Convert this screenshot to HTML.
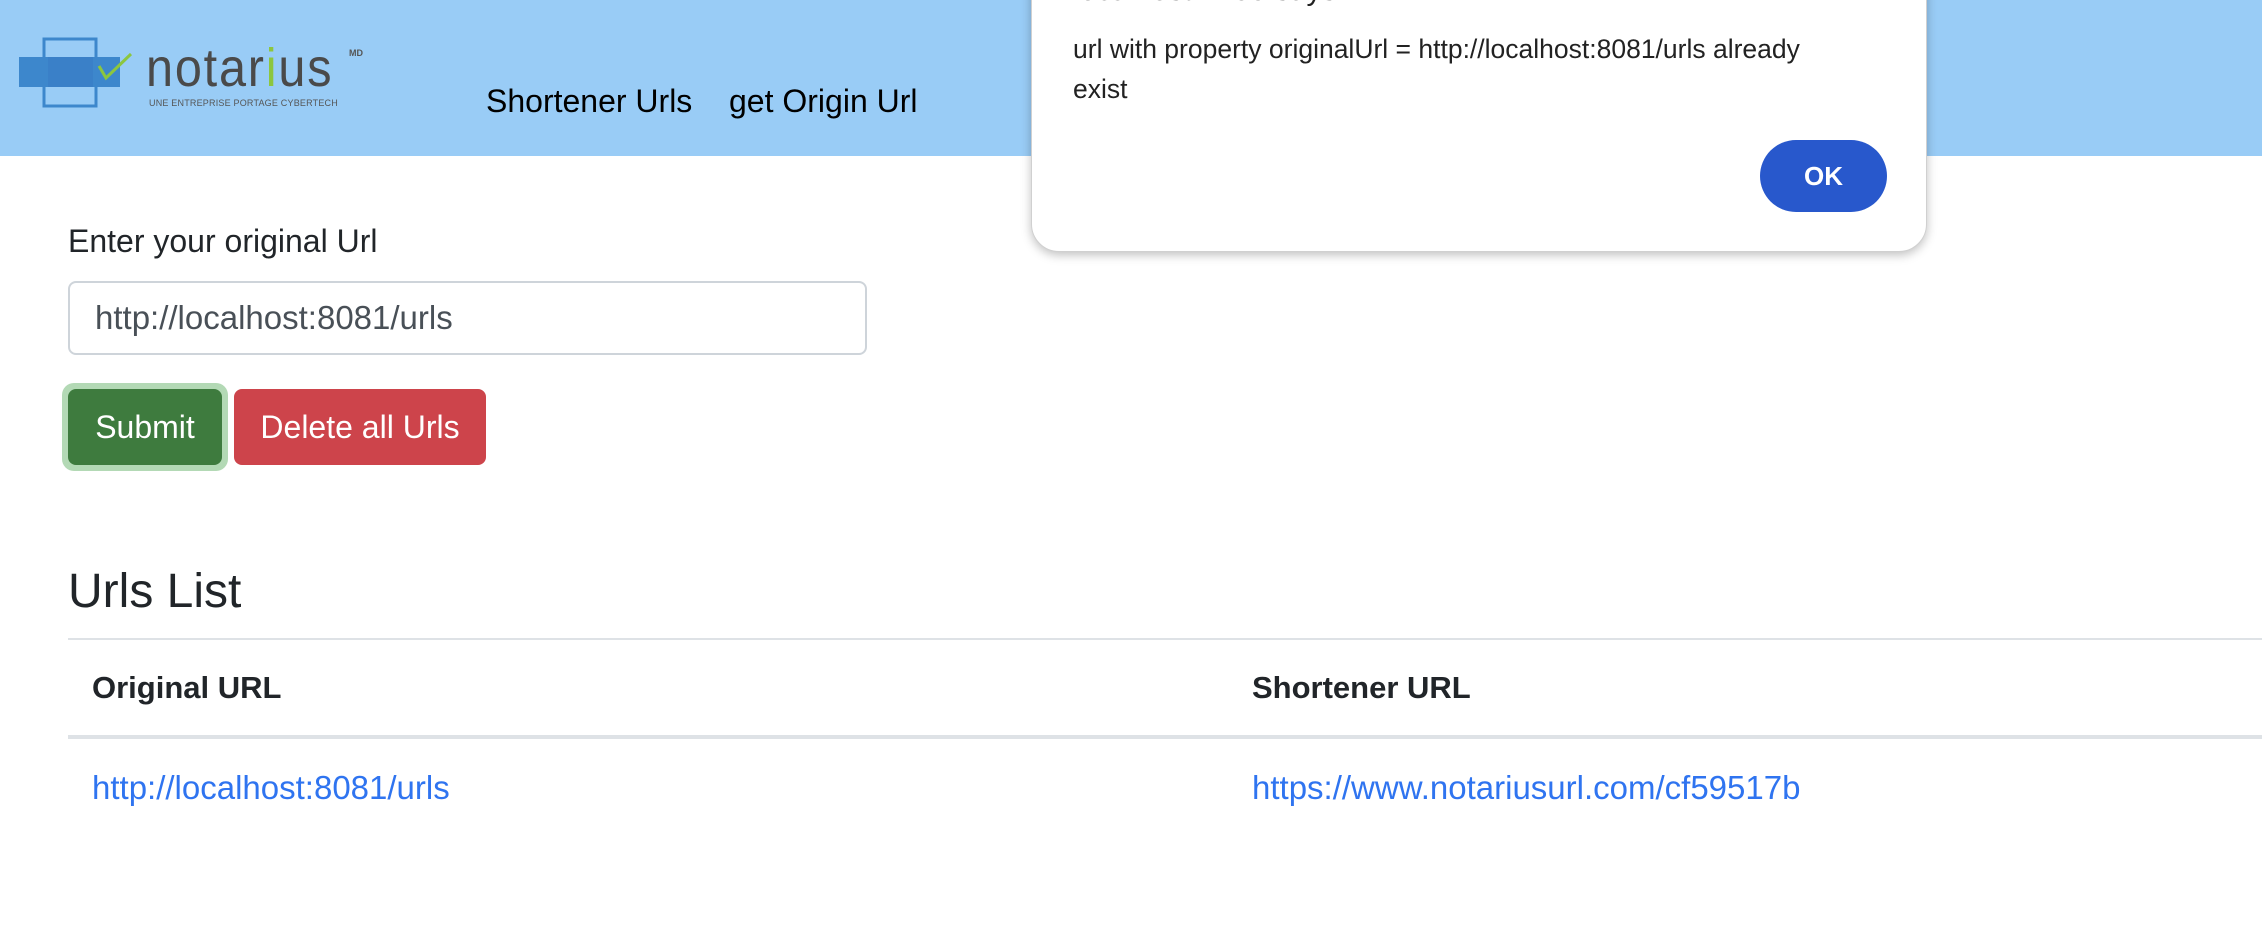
<!DOCTYPE html>
<html><head><meta charset="utf-8"><style>
*{margin:0;padding:0;box-sizing:border-box}
body{width:2262px;height:932px;background:#fff;font-family:"Liberation Sans",Arial,sans-serif;color:#212529;position:relative;overflow:hidden}
.abs{position:absolute;white-space:nowrap}
.hdr{position:absolute;left:0;top:0;width:2262px;height:156px;background:#99ccf6}
</style></head><body>
<div class="hdr"></div>
<svg class="abs" style="left:0;top:0" width="140" height="130" viewBox="0 0 140 130">
  <rect x="44" y="39" width="52" height="67" fill="none" stroke="#3d87cc" stroke-width="3"/>
  <rect x="19" y="57" width="101" height="30" fill="#3d87cc"/>
  <rect x="48" y="57" width="45" height="30" fill="#3a80c8"/>
  <path d="M99 66 L106 78 L131 54" fill="none" stroke="#8cc63f" stroke-width="3"/>
</svg>
<div class="abs" style="left:146px;top:38px;font-size:54px;color:#4a4a4a;letter-spacing:2px;line-height:60px;transform:scaleX(0.9);transform-origin:left">notar<span style="color:#8cc63f">i</span>us</div>
<div class="abs" style="left:349px;top:48px;font-size:9px;color:#555;font-weight:bold">MD</div>
<div class="abs" style="left:149px;top:98px;font-size:9px;color:#555;letter-spacing:0.2px;line-height:10px">UNE ENTREPRISE PORTAGE CYBERTECH</div>
<div class="abs" style="left:486px;top:81px;font-size:32px;line-height:40px;color:#000">Shortener Urls</div>
<div class="abs" style="left:729px;top:81px;font-size:32px;line-height:40px;color:#000">get Origin Url</div>

<div class="abs" style="left:68px;top:222px;font-size:32px;line-height:38px">Enter your original Url</div>
<div class="abs" style="left:68px;top:281px;width:799px;height:74px;border:2px solid #ced4da;border-radius:8px"></div>
<div class="abs" style="left:95px;top:299px;font-size:33px;line-height:38px;color:#495057">http://localhost:8081/urls</div>
<div class="abs" style="left:62px;top:383px;width:166px;height:88px;border-radius:12px;background:#b3d9b5"></div>
<div class="abs" style="left:68px;top:389px;width:154px;height:76px;border-radius:8px;background:#3e7b3e;color:#fff;font-size:32px;line-height:76px;text-align:center">Submit</div>
<div class="abs" style="left:234px;top:389px;width:252px;height:76px;border-radius:8px;background:#cd444b;color:#fff;font-size:32px;line-height:76px;text-align:center">Delete all Urls</div>

<div class="abs" style="left:68px;top:564px;font-size:48px;line-height:56px">Urls List</div>
<div class="abs" style="left:68px;top:638px;width:2194px;height:2px;background:#dee2e6"></div>
<div class="abs" style="left:92px;top:669px;font-size:31px;font-weight:bold;line-height:38px">Original URL</div>
<div class="abs" style="left:1252px;top:669px;font-size:31px;font-weight:bold;line-height:38px">Shortener URL</div>
<div class="abs" style="left:68px;top:735px;width:2194px;height:4px;background:#dee2e6"></div>
<div class="abs" style="left:92px;top:769px;font-size:33px;line-height:38px;color:#2f74f0">http://localhost:8081/urls</div>
<div class="abs" style="left:1252px;top:769px;font-size:33px;line-height:38px;color:#2f74f0">https://www.notariusurl.com/cf59517b</div>

<div class="abs" style="left:1031px;top:-40px;width:896px;height:292px;background:#fff;border-radius:0 0 28px 28px;box-shadow:0 3px 10px rgba(0,0,0,0.25);border:1px solid #d0d0d0"></div>
<div class="abs" style="left:1073px;top:-26px;font-size:30px;line-height:34px;color:#222">localhost:4200 says</div>
<div class="abs" style="left:1073px;top:29px;font-size:26.5px;line-height:40px;color:#222">url with property originalUrl = http://localhost:8081/urls already<br>exist</div>
<div class="abs" style="left:1760px;top:140px;width:127px;height:72px;border-radius:36px;background:#2858cc;color:#fff;font-size:26px;font-weight:bold;line-height:72px;text-align:center">OK</div>
</body></html>
